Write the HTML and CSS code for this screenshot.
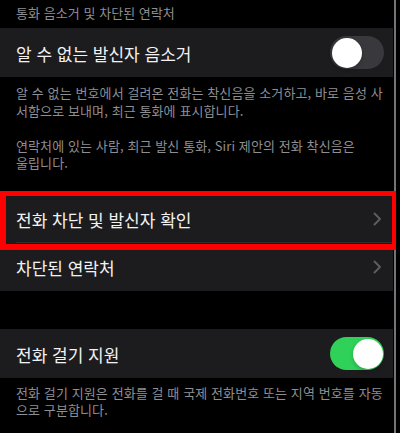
FILE: index.html
```html
<!DOCTYPE html>
<html lang="ko">
<head>
<meta charset="utf-8">
<title>통화 설정</title>
<link rel="stylesheet" href="styles.css">
</head>
<body>
<div class="screen">
  <div class="group-header">통화 음소거 및 차단된 연락처</div>
  <div class="group">
    <div class="cell cell-tall">
      <span class="cell-title">알 수 없는 발신자 음소거</span>
      <span class="switch"><span class="knob"></span></span>
    </div>
  </div>
  <div class="group-footer footer-first">알 수 없는 번호에서 걸려온 전화는 착신음을 소거하고, 바로 음성 사<br>서함으로 보내며, 최근 통화에 표시합니다.<br><br>연락처에 있는 사람, 최근 발신 통화, Siri 제안의 전화 착신음은<br>울립니다.</div>
  <div class="group">
    <div class="cell cell-link cell-sep">
      <span class="cell-title">전화 차단 및 발신자 확인</span>
      <svg class="chevron" width="9" height="14" viewBox="0 0 9 14"><path d="M1.5 1.5 L7 7 L1.5 12.5" fill="none" stroke="#5b5b60" stroke-width="2" stroke-linecap="round" stroke-linejoin="round"/></svg>
    </div>
    <div class="cell cell-link">
      <span class="cell-title">차단된 연락처</span>
      <svg class="chevron" width="9" height="14" viewBox="0 0 9 14"><path d="M1.5 1.5 L7 7 L1.5 12.5" fill="none" stroke="#5b5b60" stroke-width="2" stroke-linecap="round" stroke-linejoin="round"/></svg>
    </div>
  </div>
  <div class="group-gap"></div>
  <div class="group">
    <div class="cell cell-tall">
      <span class="cell-title">전화 걸기 지원</span>
      <span class="switch switch-on"><span class="knob"></span></span>
    </div>
  </div>
  <div class="group-footer footer-last">전화 걸기 지원은 전화를 걸 때 국제 전화번호 또는 지역 번호를 자동<br>으로 구분합니다.</div>
</div>
<div class="edge-line"></div>
<div class="highlight-box"></div>
</body>
</html>
```

FILE: styles.css
```css
html, body {
  margin: 0;
  padding: 0;
  background: #000;
  height: 433px;
  overflow: hidden;
}

body {
  position: relative;
  font-family: "Noto Sans CJK KR", "Noto Sans", sans-serif;
  color: #fff;
}

.screen {
  width: 393px;
}

.group-header {
  padding: 4px 16px 6.5px;
  font-size: 13px;
  line-height: 17.5px;
  letter-spacing: 0.05px;
  color: #8e8e93;
  white-space: nowrap;
}

.group {
  background: #1c1c1e;
}

.cell {
  display: flex;
  align-items: center;
  justify-content: space-between;
  height: 48px;
  padding: 0 9px 0 16px;
  box-sizing: border-box;
  position: relative;
}

.cell-tall {
  height: 49px;
}

.cell-link {
  padding-right: 11px;
}

.cell-sep::after {
  content: "";
  position: absolute;
  left: 16px;
  right: 0;
  bottom: 0;
  height: 1px;
  background: #2e2e31;
}

.cell-title {
  font-size: 17px;
  line-height: 22px;
  padding-top: 2px;
  white-space: nowrap;
  color: #f2f2f4;
}

.chevron {
  display: block;
}

.switch {
  display: flex;
  align-items: center;
  width: 54px;
  height: 33px;
  border-radius: 17px;
  background: #39393d;
  padding: 0 1.5px;
  box-sizing: border-box;
}

.switch-on {
  background: #30d158;
  justify-content: flex-end;
}

.knob {
  display: block;
  width: 30px;
  height: 30px;
  border-radius: 50%;
  background: #fff;
  box-shadow: 0 2px 4px rgba(0, 0, 0, 0.2);
}

.group-footer {
  padding: 7px 16px 23.5px;
  font-size: 13px;
  line-height: 17.5px;
  letter-spacing: 0.1px;
  color: #8e8e93;
  white-space: nowrap;
}

.footer-last {
  padding-top: 5.5px;
  padding-bottom: 0;
}

.group-gap {
  height: 38px;
}

.edge-line {
  position: absolute;
  left: 393.5px;
  top: 0;
  width: 2.5px;
  height: 433px;
  background: #747478;
}

.highlight-box {
  position: absolute;
  left: 0;
  top: 191px;
  width: 396px;
  height: 59px;
  box-sizing: border-box;
  border-style: solid;
  border-color: #ff0000;
  border-width: 5px 4.5px 6px 6px;
}
```
